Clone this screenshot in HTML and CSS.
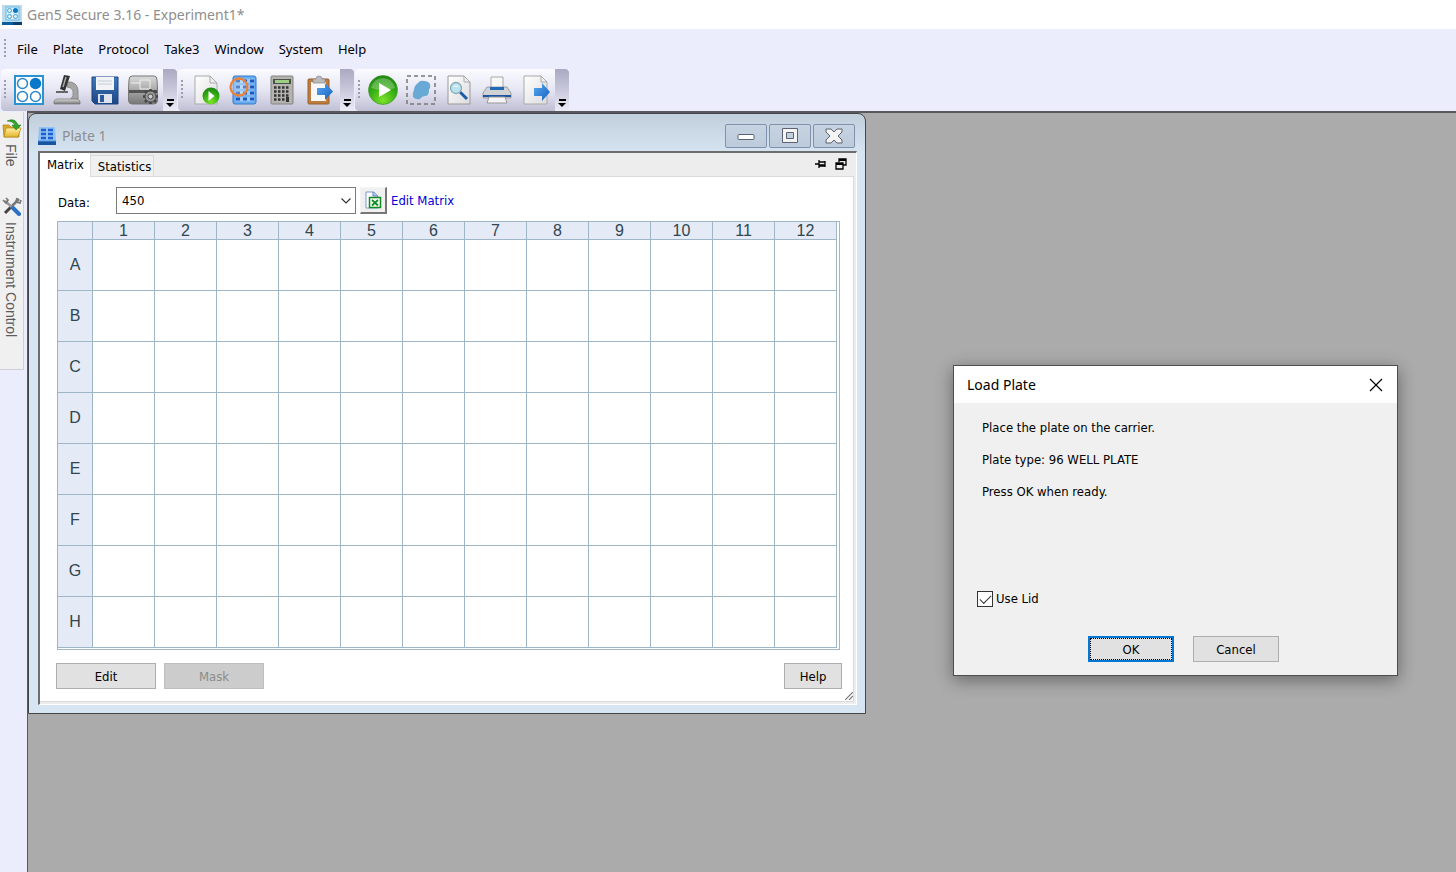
FILE: index.html
```html
<!DOCTYPE html>
<html lang="en">
<head>
<meta charset="utf-8">
<title>Gen5 Secure 3.16 - Experiment1*</title>
<link rel="stylesheet" href="styles.css">
</head>
<body>
<svg class="defs" width="0" height="0" aria-hidden="true">
  <defs>
    <linearGradient id="paper" x1="0" y1="0" x2="1" y2="1"><stop offset="0" stop-color="#fff"/><stop offset="1" stop-color="#dcdcdf"/></linearGradient>
    <linearGradient id="metal" x1="0" y1="0" x2="0" y2="1"><stop offset="0" stop-color="#dadada"/><stop offset="1" stop-color="#777"/></linearGradient>
    <linearGradient id="floppy" x1="0" y1="0" x2="0" y2="1"><stop offset="0" stop-color="#3f78bb"/><stop offset="1" stop-color="#1c4583"/></linearGradient>
    <linearGradient id="blue" x1="0" y1="0" x2="1" y2="1"><stop offset="0" stop-color="#5aa9f2"/><stop offset="1" stop-color="#1460c0"/></linearGradient>
    <radialGradient id="green" cx=".5" cy=".85" r=".8"><stop offset="0" stop-color="#7be32a"/><stop offset=".6" stop-color="#35ad14"/><stop offset="1" stop-color="#1f8a12"/></radialGradient>
    <linearGradient id="folder" x1="0" y1="0" x2="0" y2="1"><stop offset="0" stop-color="#fff0a0"/><stop offset="1" stop-color="#e2b42a"/></linearGradient>
  </defs>
</svg>
<div class="app">
  <header class="titlebar">
    <svg width="20" height="20" viewBox="0 0 20 20" aria-hidden="true"><rect width="20" height="17" fill="#b9dcf0"/><rect y="17" width="20" height="3" fill="#0c5f9c"/><rect x="11" y="17" width="9" height="3" fill="#0a3f6e"/><rect x="4" y="2" width="13" height="13" fill="#d8eefa" stroke="#6db7e0"/><g fill="none" stroke="#4ba3d6"><circle cx="7.500" cy="5.500" r="2"/><circle cx="7.500" cy="11.500" r="2"/><circle cx="13.500" cy="11.500" r="2"/></g><circle cx="13.500" cy="5.500" r="2.500" fill="#0a78c2"/></svg>
    <h1>Gen5 Secure 3.16 - Experiment1*</h1>
  </header>

  <nav class="menubar" aria-label="Main menu">
    <span class="grip"></span>
    <button type="button">File</button><button type="button">Plate</button><button type="button">Protocol</button><button type="button">Take3</button><button type="button">Window</button><button type="button">System</button><button type="button">Help</button>
  </nav>

  <div class="toolbars">
    <div class="strip" role="toolbar" aria-label="Standard">
      <span class="grip"></span>
      <button type="button" class="tool" aria-label="Task manager"><svg width="30" height="30" viewBox="0 0 30 30"><rect x="1" y="1" width="28" height="28" fill="#fff" stroke="#2b92d2" stroke-width="2"/><g fill="#fff" stroke="#2b87cc" stroke-width="1.500"><circle cx="8.500" cy="8.500" r="5"/><circle cx="8.500" cy="21.500" r="5"/><circle cx="21.500" cy="21.500" r="5"/></g><circle cx="21.500" cy="8.500" r="5.700" fill="#0a78c8"/></svg></button>
      <button type="button" class="tool" aria-label="Microscope"><svg width="30" height="30" viewBox="0 0 30 30"><path d="M16 7h3q7 2 7 9v8h-7q3-3 2-8-1-4-6-4z" fill="#a5a5a5" stroke="#808080" stroke-width=".8"/><path d="M12 0l6 1-5 15-5-2z" fill="#333"/><path d="M14 2l-3 10" stroke="#aaa" stroke-width="1.500"/><path d="M4 16h12v2H4z" fill="#666"/><path d="M2 26q1-2 4-2h18q3 0 4 2v3H2z" fill="url(#metal)" stroke="#777" stroke-width=".7"/></svg></button>
      <button type="button" class="tool" aria-label="Save"><svg width="30" height="30" viewBox="0 0 30 30"><path d="M2 2h26v27H5l-3-3z" fill="url(#floppy)" stroke="#1c4583"/><path d="M6 2h18v13H6z" fill="#f1f3f7"/><path d="M8 6h14M8 9h14" stroke="#c5cad6"/><path d="M8 19h14v9H8z" fill="#dde2ec"/><path d="M10 20h4v7h-4z" fill="#2a5a9c"/></svg></button>
      <button type="button" class="tool" aria-label="Instrument setup"><svg width="30" height="30" viewBox="0 0 30 30"><path d="M4 1h22q3 0 3 4l.5 9v11q0 4-3.500 4H4q-3.500 0-3.500-4V14L1 5q0-4 3-4z" fill="url(#metal)" stroke="#777"/><path d="M1 15h28v3H1z" fill="#555"/><path d="M3 8h10M12 5h10v9H12z" fill="none" stroke="#eee"/><g stroke="#444" stroke-width="2.500"><path d="M22.500 14v15M15 21.500h15M17 16l11 11M28 16L17 27"/></g><circle cx="22.500" cy="21.500" r="5.500" fill="#999" stroke="#444"/><circle cx="22.500" cy="21.500" r="2.500" fill="#ccc" stroke="#444"/></svg></button>
      <button type="button" class="more" aria-label="Standard toolbar options"></button>
    </div>
    <div class="strip" role="toolbar" aria-label="Experiment">
      <span class="grip"></span>
      <button type="button" class="tool" aria-label="New run"><svg width="30" height="30" viewBox="0 0 30 30"><path d="M4 1h15l7 7v21H4z" fill="url(#paper)" stroke="#aaa"/><path d="M19 1v7h7z" fill="#eee" stroke="#aaa"/><circle cx="20" cy="21" r="8.500" fill="url(#green)"/><path d="M17.500 16v10l6-5z" fill="#fff"/></svg></button>
      <button type="button" class="tool" aria-label="Plate layout"><svg width="30" height="30" viewBox="0 0 30 30"><rect x="4" y="1" width="23" height="28" rx="2" fill="#68acf0" stroke="#347bc9"/><path d="M7 6h18M7 12h18M7 18h18M7 24h18" stroke="#9fcbfa" stroke-width="4.500"/><path d="M7 6h18M7 12h18M7 18h18M7 24h18" stroke="#1d59bd" stroke-width="3" stroke-dasharray="4 3"/><circle cx="10" cy="12" r="8.500" fill="#fff" fill-opacity=".25" stroke="#ec8138" stroke-width="2.300"/></svg></button>
      <button type="button" class="tool" aria-label="Calculator"><svg width="30" height="30" viewBox="0 0 30 30"><rect x="4" y="1" width="22" height="28" rx="1" fill="#b5b3b0" stroke="#85827f"/><path d="M6 4h18v5H6z" fill="#4b514a"/><path d="M8 5h14v3H8z" fill="#9cce83"/><path d="M7 12.500h16M7 16.500h16M7 20.500h16M7 24.500h11" stroke="#333" stroke-width="2.400" stroke-dasharray="2.500 1.500"/><path d="M19 22h3v5h-3z" fill="#333"/></svg></button>
      <button type="button" class="tool" aria-label="Export"><svg width="30" height="30" viewBox="0 0 30 30"><rect x="3" y="4" width="21" height="25" rx="1" fill="#bd7b3d" stroke="#996331"/><path d="M6 7h15v19H6z" fill="#f7f8fa"/><path d="M8 8V4h3q0-3 3-3t3 3h3v4z" fill="#bbb" stroke="#888" stroke-width=".7"/><path d="M12 13h8V8l8 8.500-8 8.500v-5h-8z" fill="url(#blue)"/></svg></button>
      <button type="button" class="more" aria-label="Experiment toolbar options"></button>
    </div>
    <div class="strip" role="toolbar" aria-label="Plate">
      <span class="grip"></span>
      <button type="button" class="tool" aria-label="Read"><svg width="30" height="30" viewBox="0 0 30 30"><circle cx="15" cy="15" r="14.500" fill="url(#green)" stroke="#4b9a36" stroke-width=".7"/><path d="M3 13q3-10 12-10t12 10q-12 4-24 0z" fill="#fff" opacity=".25"/><path d="M11 8v14l12-7z" fill="#fff"/></svg></button>
      <button type="button" class="tool" aria-label="Select region"><svg width="30" height="30" viewBox="0 0 30 30"><path d="M1 1h28v28H1z" fill="none" stroke="#777" stroke-width="1.500" stroke-dasharray="4 3"/><path d="M12 8q2-3 6-2 4 0 6 3 1 3-1 6 0 6-4 6-3 0-5 3-4 1-7-2-1-4 1-7 0-4 4-7z" fill="#69a9d5"/></svg></button>
      <button type="button" class="tool" aria-label="Print preview"><svg width="30" height="30" viewBox="0 0 30 30"><path d="M4 1h16l6 6v22H4z" fill="url(#paper)" stroke="#999"/><path d="M20 1v6h6z" fill="#eee" stroke="#aaa"/><path d="M16 17l7 7" stroke="#1b5ba8" stroke-width="3"/><circle cx="12" cy="13" r="5.500" fill="#b9e3f2" stroke="#8ba7b3" stroke-width="1.300"/><path d="M9 12q3-3 6 0z" fill="#fff"/></svg></button>
      <button type="button" class="tool" aria-label="Print"><svg width="30" height="30" viewBox="0 0 30 30"><path d="M9 2h12v12H9z" fill="#f7f7f8" stroke="#aaa"/><path d="M5 12h20l4 6v5H1v-5z" fill="#d1d2d5" stroke="#888" stroke-width=".7"/><path d="M8 12h14v3H8z" fill="#236ab5"/><path d="M1 20h28v2H1z" fill="#1c55a2"/><path d="M7 22h16l2 6H5z" fill="#f4f4f6" stroke="#999"/></svg></button>
      <button type="button" class="tool" aria-label="Export file"><svg width="30" height="30" viewBox="0 0 30 30"><path d="M4 1h17l6 6v22H4z" fill="url(#paper)" stroke="#aaa"/><path d="M21 1v6h6z" fill="#eee" stroke="#aaa"/><path d="M14 13h8V8l8 9-8 9v-5h-8z" fill="url(#blue)"/></svg></button>
      <button type="button" class="more" aria-label="Plate toolbar options"></button>
    </div>
  </div>

  <div class="workspace">
    <aside class="rail">
      <div class="rail-tabs">
        <button type="button" class="rail-tab"><svg width="20" height="20" viewBox="0 0 20 20" aria-hidden="true"><path d="M1 7h6l2 2h8v10H2z" fill="#d9a928" stroke="#a67c15" stroke-width=".7"/><path d="M4 10h15l-3 9H2z" fill="url(#folder)" stroke="#b38b1c" stroke-width=".7"/><path d="M5 3q8-4 11 4h3l-5 5-4-5h3q-2-4-8-4z" fill="#32a52a" stroke="#15761a" stroke-width=".5"/></svg><span>File</span></button>
        <button type="button" class="rail-tab"><svg width="20" height="20" viewBox="0 0 20 20" aria-hidden="true"><path d="M17 3L8 12" stroke="#777" stroke-width="2.500"/><path d="M3 17l6-6" stroke="#444" stroke-width="3"/><path d="M3 5l9 8" stroke="#999" stroke-width="2.500"/><path d="M1 4l3 3 2-3-2-2M15 2l-1 4 4 1 1-3" fill="none" stroke="#777" stroke-width="1.700"/><path d="M11 12l6 6" stroke="#2b70c4" stroke-width="4" stroke-linecap="round"/></svg><span>Instrument Control</span></button>
      </div>
    </aside>

    <main class="desk">
      <section class="plate" aria-labelledby="plate-title">
        <header class="plate-head">
          <svg width="18" height="18" viewBox="0 0 18 18" aria-hidden="true"><path d="M1 0h16l1 14H0z" fill="#91c1f5"/><path d="M0 14h18v4H0z" fill="#17559f"/><path d="M3 3h13M3 7h13M3 11h13" stroke="#1c5fd0" stroke-width="2.500" stroke-dasharray="5 2"/><path d="M0 14h18" stroke="#4f93dc"/></svg>
          <h2 id="plate-title">Plate 1</h2>
          <div class="controls">
            <button type="button" aria-label="Minimize"><svg width="20" height="18" viewBox="0 0 20 18"><rect x="2" y="7.500" width="16" height="5" rx="1" fill="#fff" stroke="#5b6270"/></svg></button>
            <button type="button" aria-label="Maximize"><svg width="20" height="18" viewBox="0 0 20 18"><path d="M2.500 1.500h15v14h-15zM6.500 5.500v6h7v-6z" fill="#f4f4f4" fill-rule="evenodd" stroke="#5b6270"/></svg></button>
            <button type="button" aria-label="Close"><svg width="20" height="18" viewBox="0 0 20 18"><path d="M2 2h5l3 3 3-3h5v3l-4 4 4 4v3h-5l-3-3-3 3H2v-3l4-4-4-4z" fill="#f4f4f4" stroke="#5b6270"/></svg></button>
          </div>
        </header>
        <div class="frame">
          <div class="tabs">
            <button type="button" class="tab active">Matrix</button>
            <button type="button" class="tab">Statistics</button>
            <div class="tab-tools">
              <button type="button" aria-label="Pin"><svg width="12" height="12" viewBox="0 0 12 12"><path d="M1 6h4M5 2v8M5 4h6v4H5M5 7h6M11 3v6" fill="none" stroke="#000" stroke-width="1.300"/></svg></button>
              <button type="button" aria-label="Float"><svg width="12" height="12" viewBox="0 0 12 12"><path d="M4 4V1h7v6H8M1 5h7v6H1z" fill="none" stroke="#000" stroke-width="1.300"/><path d="M4 2h7M1 6h7" stroke="#000" stroke-width="2"/></svg></button>
            </div>
          </div>
          <div class="page">
            <div class="data-row">
              <label for="data">Data:</label>
              <span class="combo">
                <select id="data"><option>450</option></select>
                <svg width="10" height="6" viewBox="0 0 10 6" aria-hidden="true"><path d="M.5.500L5 5 9.500.500" fill="none" stroke="#333" stroke-width="1.200"/></svg>
              </span>
              <button type="button" class="excel" aria-label="Export to Excel"><svg width="18" height="18" viewBox="0 0 18 18"><path d="M2 1h8l4 4v12H2z" fill="#fff" stroke="#7f9ccc"/><path d="M9 1v4h5" fill="#b3c9ec" stroke="#5e83c2"/><path d="M5.500 6.500h11v10h-11z" fill="#f3fff3" stroke="#128a24" stroke-width="1.500"/><path d="M8 9l6 5.500M14 9l-6 5.500" stroke="#128a24" stroke-width="1.700"/></svg></button>
              <a href="#matrix">Edit Matrix</a>
            </div>
            <div class="matrix" id="matrix">
              <table>
                <thead><tr><th class="corner"></th><th>1</th><th>2</th><th>3</th><th>4</th><th>5</th><th>6</th><th>7</th><th>8</th><th>9</th><th>10</th><th>11</th><th>12</th></tr></thead>
                <tbody>
                  <tr><th>A</th><td></td><td></td><td></td><td></td><td></td><td></td><td></td><td></td><td></td><td></td><td></td><td></td></tr>
                  <tr><th>B</th><td></td><td></td><td></td><td></td><td></td><td></td><td></td><td></td><td></td><td></td><td></td><td></td></tr>
                  <tr><th>C</th><td></td><td></td><td></td><td></td><td></td><td></td><td></td><td></td><td></td><td></td><td></td><td></td></tr>
                  <tr><th>D</th><td></td><td></td><td></td><td></td><td></td><td></td><td></td><td></td><td></td><td></td><td></td><td></td></tr>
                  <tr><th>E</th><td></td><td></td><td></td><td></td><td></td><td></td><td></td><td></td><td></td><td></td><td></td><td></td></tr>
                  <tr><th>F</th><td></td><td></td><td></td><td></td><td></td><td></td><td></td><td></td><td></td><td></td><td></td><td></td></tr>
                  <tr><th>G</th><td></td><td></td><td></td><td></td><td></td><td></td><td></td><td></td><td></td><td></td><td></td><td></td></tr>
                  <tr><th>H</th><td></td><td></td><td></td><td></td><td></td><td></td><td></td><td></td><td></td><td></td><td></td><td></td></tr>
                </tbody>
              </table>
            </div>
            <div class="actions">
              <button type="button" class="btn wide">Edit</button>
              <button type="button" class="btn wide" disabled>Mask</button>
              <button type="button" class="btn help">Help</button>
            </div>
            <svg class="resize" width="8" height="8" viewBox="0 0 8 8" aria-hidden="true"><path d="M0 8l8-8M4 8l4-4" stroke="#777" stroke-width="1.200"/></svg>
          </div>
        </div>
      </section>

      <section class="dialog" role="dialog" aria-labelledby="dialog-title">
        <header class="dialog-head">
          <h2 id="dialog-title">Load Plate</h2>
          <button type="button" aria-label="Close"><svg width="14" height="14" viewBox="0 0 14 14"><path d="M1 1l12 12M13 1L1 13" stroke="#000" stroke-width="1.200"/></svg></button>
        </header>
        <div class="dialog-body">
          <p>Place the plate on the carrier.</p>
          <p>Plate type: 96 WELL PLATE</p>
          <p>Press OK when ready.</p>
        </div>
        <label class="lid"><input type="checkbox" checked>Use Lid</label>
        <div class="dialog-actions">
          <button type="button" class="btn default">OK</button>
          <button type="button" class="btn">Cancel</button>
        </div>
      </section>
    </main>
  </div>
</div>
</body>
</html>
```
FILE: styles.css
```css
* { box-sizing: border-box; }

body {
  margin: 0;
  font: 13px/16px "DejaVu Sans Condensed", "Noto Sans", sans-serif;
  color: #000;
}

h1, h2, p { margin: 0; font-weight: 400; }
button { margin: 0; padding: 0; border: 0; background: none; font: inherit; color: inherit; }
svg { display: block; flex: none; }
.defs { position: absolute; }

.app { display: flex; flex-direction: column; min-height: 100vh; background: #ecedfc; }

.titlebar { display: flex; align-items: center; gap: 5px; height: 29px; padding-left: 2px; background: #fff; }
.titlebar h1, .plate-head h2 { font: 14px/20px "Noto Sans", sans-serif; color: #8e8e8e; }

.menubar { display: flex; align-items: center; height: 40px; padding-left: 1px; font: 13px/18px "Noto Sans", sans-serif; }
.menubar button { margin-right: 15px; }
.menubar .grip { margin-right: 7px; }

.grip {
  width: 9px;
  height: 20px;
  background: repeating-linear-gradient(#9c9cab 0 2px, transparent 2px 4px) 3px 0 / 2px 100% no-repeat;
}

.toolbars { display: flex; gap: 1px; height: 42px; padding-left: 1px; }
.strip {
  display: flex;
  align-items: center;
  border-radius: 4px 0 0 4px;
  background: linear-gradient(#fafaff, #e9e9f6 45%, #c0c0d5);
}
.tool { display: grid; place-items: center; width: 38px; height: 42px; }
.more {
  display: flex;
  flex-direction: column;
  align-items: center;
  justify-content: flex-end;
  gap: 2px;
  width: 14px;
  height: 42px;
  margin-left: 1px;
  padding-bottom: 4px;
  border-radius: 0 4px 0 0;
  background: linear-gradient(#a9a9c2, #c9c9dc 50%, #ebebf8);
}
.more::before { content: ""; width: 7px; height: 2px; background: #000; }
.more::after { content: ""; border: 4px solid transparent; border-top-color: #000; border-bottom: 0; }

.workspace { display: flex; flex: 1; }
.rail { width: 27px; padding-top: 1px; }
.rail-tabs { display: flex; flex-direction: column; width: 24px; height: 258px; border: solid #cfcfd6; border-width: 0 1px 1px 0; background: #f0f0f0; }
.rail-tab {
  display: flex;
  flex-direction: column;
  align-items: flex-start;
  gap: 6px;
  height: 78px;
  padding: 6px 0 0 2px;
  color: #5c5c5c;
  font: 14px/18px "Liberation Sans", sans-serif;
}
.rail-tab:last-child { height: auto; }
.rail-tab span { writing-mode: vertical-rl; white-space: nowrap; }

.desk { position: relative; flex: 1; border: solid #58585c; border-width: 2px 0 0 1px; background: #ababab; overflow: hidden; }

.plate {
  position: absolute;
  left: 0;
  top: 0;
  width: 838px;
  padding: 0 8px 8px 9px;
  border: 1px solid #44464c;
  border-radius: 8px 8px 0 0;
  background: linear-gradient(#c1cfdd, #d7e4f1 40px);
}
.plate-head { display: flex; align-items: center; height: 37px; padding: 6px 2px 0 0; gap: 6px; }
.plate-head h2 { flex: 1; }
.controls { display: flex; gap: 2px; }
.controls button {
  display: grid;
  place-items: center;
  width: 42px;
  height: 24px;
  border: 1px solid #8191ad;
  border-radius: 2px;
  background: linear-gradient(#c6d3e1, #bccbdc);
}

.frame { padding: 0 2px 2px 0; border: solid #6d6d6d; border-width: 2px 1px 1px 2px; border-right-color: #fff; border-bottom-color: #fff; background: #ededed; }
.tabs { display: flex; align-items: flex-end; height: 24px; box-shadow: inset 0 -1px #dadada; }
.tab { height: 22px; padding: 1px 2px 0 7px; border: solid #dadada; border-width: 1px 1px 1px 0; background: #f0f0f0; }
.tab.active { height: 24px; padding: 0 6px 0 7px; border: 0; border-right: 1px solid #dadada; background: #fff; }
.tab-tools { display: flex; gap: 9px; margin-left: auto; padding: 0 7px 7px 0; }

.page { position: relative; padding: 10px 13px 12px 17px; border: solid #dadada; border-width: 0 1px 1px 0; background: #fff; }
.data-row { display: flex; align-items: center; height: 27px; }
.data-row label { width: 59px; padding: 5px 0 0 1px; }
.combo { position: relative; width: 240px; margin-right: 4px; }
.combo select {
  display: block;
  width: 100%;
  height: 27px;
  padding: 1px 5px 0;
  border: 1px solid #7a7a7a;
  border-radius: 0;
  background: #fff;
  color: #000;
  font: inherit;
  appearance: none;
}
.combo svg { position: absolute; right: 5px; top: 11px; pointer-events: none; }
.excel { display: grid; place-items: center; width: 27px; height: 27px; margin-right: 4px; border: solid #f4f4f4; border-width: 1px 2px 2px 1px; border-right-color: #777; border-bottom-color: #777; background: #f0f0f0; }
.data-row a { padding-top: 1px; color: #0000d8; text-decoration: none; }

.matrix { margin-top: 7px; padding: 0 2px 1px 0; border: 1px solid #9fb6c9; }
.matrix table { width: 100%; table-layout: fixed; border-spacing: 0; font: 16px/16px "Liberation Sans", sans-serif; color: #2f4550; }
.matrix th, .matrix td { height: 51px; padding: 0; border: solid #9fb6c9; border-width: 0 1px 1px 0; }
.matrix th { background: #e4ebf7; font-weight: 400; }
.matrix thead th { height: 18px; padding-top: 1px; }
.matrix .corner { width: 35px; }

.btn { width: 86px; height: 26px; padding-top: 1px; border: 1px solid #adadad; background: #e1e1e1; }
.btn:disabled { border-color: #bfbfbf; background: #ccc; color: #8b8b8b; }
.btn.wide { width: 100px; }
.btn.help { width: 58px; margin-left: auto; }
.actions { display: flex; gap: 8px; margin: 13px -2px 0 -1px; }
.resize { position: absolute; right: 0; bottom: 1px; }

.dialog {
  position: absolute;
  left: 925px;
  top: 252px;
  width: 445px;
  border: 1px solid #4d4d4d;
  background: #f0f0f0;
  box-shadow: 0 4px 16px rgba(0, 0, 0, .4);
}
.dialog-head { display: flex; align-items: center; justify-content: space-between; height: 37px; padding: 0 14px 0 13px; background: #fff; }
.dialog-head h2 { font: 14px/20px "Noto Sans", sans-serif; }
.dialog-body { display: flex; flex-direction: column; gap: 16px; height: 188px; padding: 17px 28px; }
.lid { display: flex; align-items: center; gap: 3px; width: fit-content; margin-left: 23px; }
.lid input { display: grid; place-items: center; width: 16px; height: 16px; margin: 0; border: 1px solid #333; background: #fff; appearance: none; }
.lid input:checked::before { content: ""; width: 10px; height: 5px; margin-bottom: 3px; border: solid #333; border-width: 0 0 1px 1px; transform: rotate(-45deg); }
.dialog-actions { display: flex; justify-content: flex-end; gap: 19px; padding: 29px 118px 13px; }
.btn.default { border: 2px solid #0078d7; outline: 1px dotted #000; outline-offset: -3px; }
```
